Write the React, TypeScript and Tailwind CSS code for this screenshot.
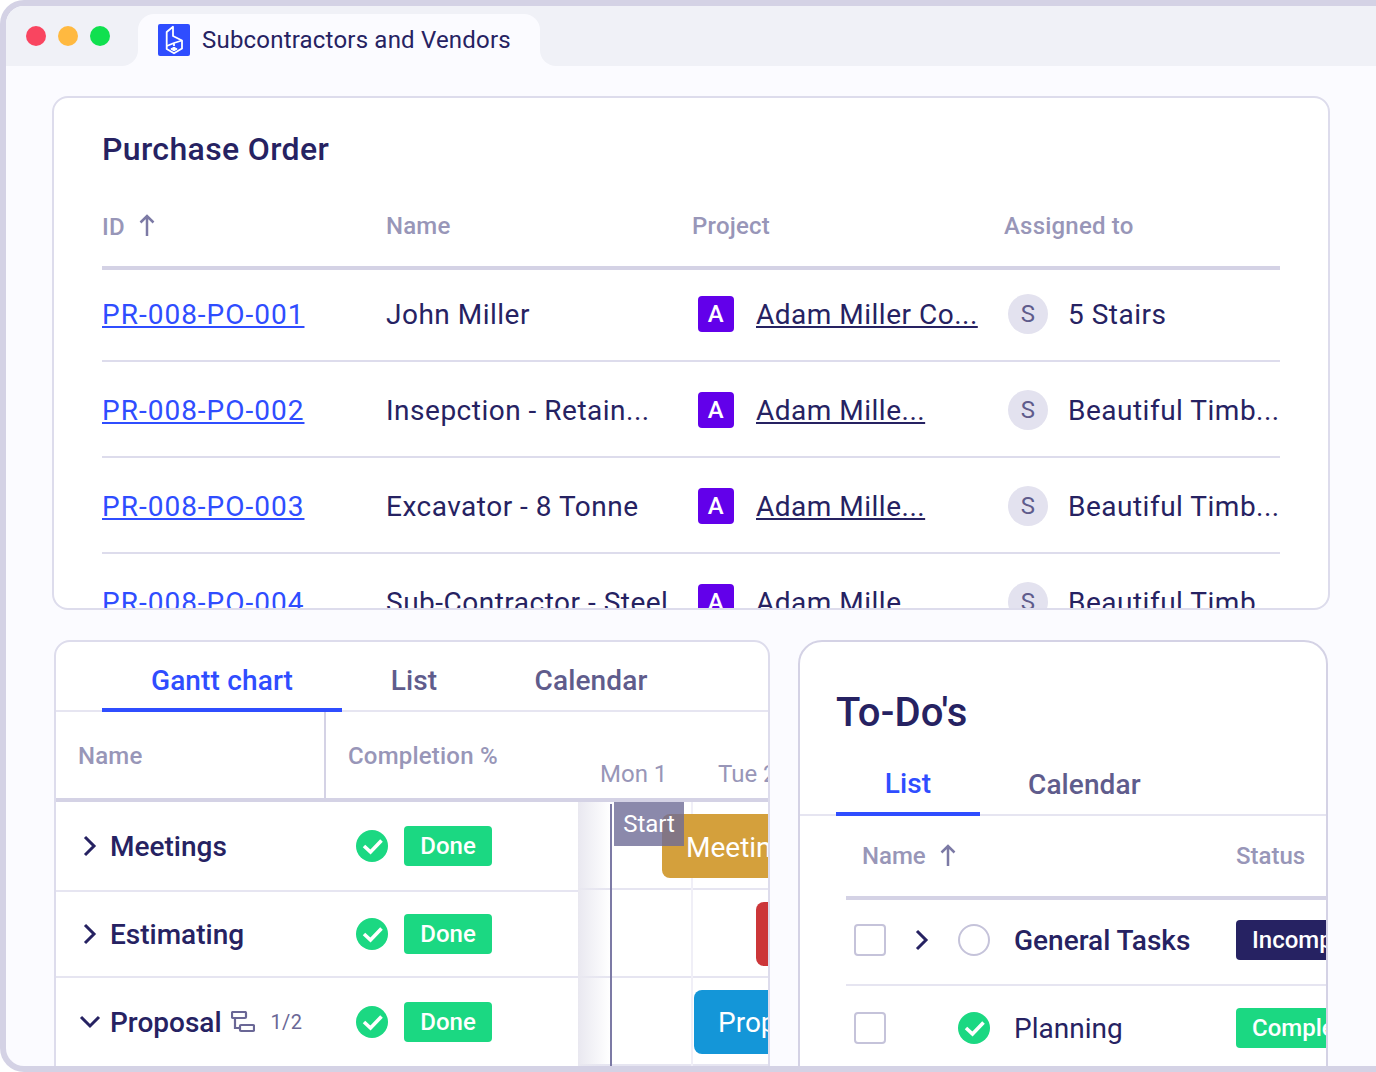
const purchaseOrders = [
  { id: 'PR-008-PO-001', name: 'John Miller', project: 'Adam Miller Co...', vendor: '5 Stairs' },
  { id: 'PR-008-PO-002', name: 'Insepction - Retain...', project: 'Adam Mille...', vendor: 'Beautiful Timb...' },
  { id: 'PR-008-PO-003', name: 'Excavator - 8 Tonne', project: 'Adam Mille...', vendor: 'Beautiful Timb...' },
  { id: 'PR-008-PO-004', name: 'Sub-Contractor - Steel', project: 'Adam Mille', vendor: 'Beautiful Timb' },
];

function Logo() {
  return (
    <svg width="32" height="32" viewBox="0 0 32 32" fill="none" className="shrink-0">
      <rect width="32" height="32" rx="2" fill="#2f4dff" />
      <g stroke="white" strokeWidth="1.800" strokeLinejoin="round">
        <path d="M8.700 8 15 2.800V12l9 4.500v8L16 29.300l-7.300-4.300Z" />
        <path d="M8.700 22 16 19l8-2.500M16 19v3" />
        <path d="m12.800 25 3.200-1.800 3.200 1.800-3.200 1.800Z" fill="white" strokeWidth="1" />
      </g>
    </svg>
  );
}

function SortArrow() {
  return (
    <svg width="16" height="22" viewBox="0 0 16 22" fill="none" stroke="#7c7aa5" strokeWidth="2.500" className="-mt-[3px] shrink-0">
      <path d="M8 22V2M1.500 8.500 8 2l6.500 6.500" />
    </svg>
  );
}

function Chevron({ open = false }: { open?: boolean }) {
  return (
    <svg width="30" height="30" viewBox="0 0 30 30" fill="none" stroke="#262262" strokeWidth="3" className="shrink-0">
      {open ? <path d="m6 10 9 9 9-9" /> : <path d="m11 6 9 9-9 9" />}
    </svg>
  );
}

function CheckCircle() {
  return (
    <svg width="32" height="32" viewBox="0 0 32 32" className="shrink-0">
      <circle cx="16" cy="16" r="16" fill="#1bd882" />
      <path d="m8 16 6.500 6L25.500 10.500" fill="none" stroke="white" strokeWidth="3.600" />
    </svg>
  );
}

function SubtaskIcon() {
  return (
    <svg width="24" height="22" viewBox="0 0 24 22" fill="none" stroke="#6a6796" strokeWidth="2.200" className="shrink-0">
      <rect x="1" y="1" width="14" height="6" rx="1" />
      <rect x="9" y="14" width="14" height="6" rx="1" />
      <path d="M4 7v10h5" />
    </svg>
  );
}

function PurchaseOrderCard() {
  return (
    <section className="h-[514px] w-[1278px] shrink-0 overflow-hidden rounded-[16px] border-2 border-[#dddcec] bg-white px-12 pt-[30px]">
      <h2 className="text-[32px] leading-[42px] font-medium tracking-[0.36px] text-[#262262]">Purchase Order</h2>
      <div className="mt-[37px] grid h-[63px] grid-cols-[284px_306px_312px_1fr] border-b-4 border-[#d4d2e5] pb-[20px] text-[24px] leading-[38px] font-medium tracking-[0.2px] text-[#9896b8]">
        <div className="flex items-center gap-[14px]">
          ID <SortArrow />
        </div>
        <div>Name</div>
        <div>Project</div>
        <div>Assigned to</div>
      </div>
      {purchaseOrders.map((row, i) => (
        <div
          key={row.id}
          className={`grid grid-cols-[284px_306px_312px_1fr] items-center border-b-2 border-[#dddcec] text-[28px] tracking-[0.5px] text-[#262262] ${
            i === 0 ? 'h-[92px] pb-[2px]' : 'h-[96px] pt-[2px]'
          }`}
        >
          <a className="pt-[2px] tracking-[1px] text-[#2f4dff] underline decoration-2 underline-offset-2">{row.id}</a>
          <div className="pt-[2px] whitespace-nowrap">{row.name}</div>
          <div className="flex items-center gap-[22px] pl-[6px]">
            <span className="flex h-9 w-9 items-center justify-center rounded-[4px] bg-[#6200ea] text-[24px] font-medium text-white">
              A
            </span>
            <span className="pt-[2px] whitespace-nowrap underline underline-offset-2">{row.project}</span>
          </div>
          <div className="flex items-center gap-5 pl-1">
            <span className="flex h-10 w-10 items-center justify-center rounded-full bg-[#e3e2ef] text-[24px] text-[#5f5c8c]">
              S
            </span>
            <span className="pt-[2px] whitespace-nowrap">{row.vendor}</span>
          </div>
        </div>
      ))}
    </section>
  );
}

const ganttRows = [
  { name: 'Meetings', open: false, h: 'h-[90px]' },
  { name: 'Estimating', open: false, h: 'h-[86px]' },
  { name: 'Proposal', open: true, h: 'h-[88px]' },
];

function GanttCard() {
  return (
    <section className="h-[440px] w-[716px] shrink-0 overflow-hidden rounded-t-[16px] border-2 border-[#dddcec] bg-white">
      <div className="flex h-[70px] border-b-2 border-[#e6e5f1] pl-[46px] text-[28px] font-medium tracking-[0.15px]">
        <div className="-mb-[2px] flex h-[70px] w-[240px] items-center justify-center border-b-4 border-[#2f4dff] pt-[12px] text-[#2f4dff]">
          Gantt chart
        </div>
        <div className="flex w-[144px] items-center justify-center pt-[10px] text-[#5f5c8c]">List</div>
        <div className="flex w-[210px] items-center justify-center pt-[10px] text-[#5f5c8c]">Calendar</div>
      </div>
      <div className="flex h-[90px] border-b-4 border-[#d4d2e5] text-[24px] tracking-[0.2px] text-[#9896b8]">
        <div className="flex w-[270px] shrink-0 items-center border-r-2 border-[#d4d2e5] pt-[2px] pl-[22px] font-medium">Name</div>
        <div className="flex w-[274px] shrink-0 items-center pt-[2px] pl-[22px] font-medium whitespace-nowrap">Completion %</div>
        <div className="w-[118px] shrink-0 pt-[44px] leading-[36px] tracking-normal">Mon 1</div>
        <div className="pt-[44px] leading-[36px] tracking-normal whitespace-nowrap">Tue 2</div>
      </div>
      <div className="flex">
        <div className="w-[522px] shrink-0">
          {ganttRows.map((row, i) => (
            <div key={row.name} className={`flex items-center ${row.h} ${i < 2 ? 'border-b-2 border-[#e6e5f1]' : ''}`}>
              <div className="flex w-[300px] items-center text-[28px] font-medium text-[#262262]">
                <span className={row.open ? 'ml-[19px]' : 'ml-[18px]'}>
                  <Chevron open={row.open} />
                </span>
                <span className={`pt-[2px] ${row.open ? 'ml-[5px]' : 'ml-[6px]'}`}>{row.name}</span>
                {row.open && (
                  <>
                    <span className="ml-[9px]">
                      <SubtaskIcon />
                    </span>
                    <span className="ml-4 text-[20px] font-normal tracking-[0.3px] text-[#6a6796]">1/2</span>
                  </>
                )}
              </div>
              <CheckCircle />
              <span className="ml-4 flex h-10 w-[88px] items-center justify-center rounded-[4px] bg-[#1bd882] text-[24px] font-medium text-white">
                Done
              </span>
            </div>
          ))}
        </div>
        <div className="relative h-[264px] flex-1 overflow-hidden">
          <div className="h-[88px] border-b-2 border-[#e6e5f1]" />
          <div className="h-[88px] border-b-2 border-[#e6e5f1]" />
          <div className="h-[88px] border-b-2 border-[#e6e5f1]" />
          <div className="absolute inset-y-0 left-0 w-8 bg-gradient-to-r from-[#e9e8f0] to-transparent" />
          <div className="absolute inset-y-0 left-[113px] w-[2px] bg-[#f0eff7]" />
          <div className="absolute top-[2px] bottom-0 left-[32px] w-[2px] bg-[#7c7aa5]" />
          <div className="absolute top-[12px] left-[84px] flex h-16 w-[160px] items-center rounded-[8px] bg-[#d4a03c] pt-[3px] pl-6 text-[28px] text-white">
            Meeting
          </div>
          <div className="absolute top-[100px] left-[178px] h-16 w-[40px] rounded-[8px] bg-[#cc3639]" />
          <div className="absolute top-[188px] left-[116px] flex h-16 w-[200px] items-center rounded-[8px] bg-[#1496d8] pt-[2px] pl-6 text-[28px] text-white">
            Proposal
          </div>
          <div className="absolute top-0 left-[36px] flex h-[44px] w-[70px] items-center justify-center bg-[#6e6b96]/80 text-[24px] text-white">
            Start
          </div>
        </div>
      </div>
    </section>
  );
}

function TodoCard() {
  return (
    <section className="h-[440px] w-[530px] shrink-0 overflow-hidden rounded-t-[24px] border-2 border-[#d4d2e5] bg-white">
      <h2 className="pt-[45px] pl-[36px] text-[40px] leading-[52px] font-medium tracking-[0.2px] text-[#262262]">To-Do's</h2>
      <div className="mt-[17px] flex h-[60px] border-b-2 border-[#e6e5f1] pl-[36px] text-[28px] font-medium tracking-[0.1px]">
        <div className="-mb-[2px] flex h-[60px] w-[144px] items-center justify-center border-b-4 border-[#2f4dff] text-[#2f4dff]">
          List
        </div>
        <div className="flex items-center pl-[48px] text-[#5f5c8c]">Calendar</div>
      </div>
      <div className="ml-[46px] flex h-[84px] items-start border-b-4 border-[#d4d2e5] pt-[20px] text-[24px] leading-[40px] font-medium text-[#9896b8]">
        <div className="flex w-[390px] items-center gap-[14px] pl-4">
          Name <SortArrow />
        </div>
        <div>Status</div>
      </div>
      <div className="ml-[46px] flex h-[86px] items-center border-b-2 border-[#e6e5f1] pb-[4px] text-[28px] text-[#262262]">
        <span className="ml-2 h-8 w-8 shrink-0 rounded-[4px] border-2 border-[#c5c3da]" />
        <span className="ml-[20px]">
          <Chevron />
        </span>
        <span className="ml-[22px] h-8 w-8 shrink-0 rounded-full border-2 border-[#c5c3da]" />
        <span className="ml-6 w-[222px] shrink-0 pt-[2px] font-medium">General Tasks</span>
        <span className="flex h-10 w-[140px] shrink-0 items-center rounded-[4px] bg-[#262262] pl-4 text-[24px] font-medium text-white">
          Incomplete
        </span>
      </div>
      <div className="ml-[46px] flex h-[86px] items-center pb-[2px] text-[28px] text-[#262262]">
        <span className="ml-2 h-8 w-8 shrink-0 rounded-[4px] border-2 border-[#c5c3da]" />
        <span className="ml-[72px]">
          <CheckCircle />
        </span>
        <span className="ml-6 w-[222px] shrink-0 pt-[2px]">Planning</span>
        <span className="flex h-10 w-[140px] shrink-0 items-center rounded-[4px] bg-[#1bd882] pl-4 text-[24px] font-medium text-white">
          Complete
        </span>
      </div>
    </section>
  );
}

export default function App() {
  return (
    <div className="h-[1072px] w-[1376px] overflow-hidden bg-white font-['Roboto',sans-serif]">
      <div className="flex h-full flex-col overflow-hidden rounded-l-[24px] border-[6px] border-r-0 border-[#d4d2e5] bg-[#fbfbff]">
        {/* Browser tab bar */}
        <header className="flex h-[60px] shrink-0">
          <div className="flex w-[132px] items-start gap-3 rounded-br-[16px] bg-[#f0f1f7] pt-[20px] pl-5">
            <span className="h-5 w-5 rounded-full bg-[#f94560]" />
            <span className="h-5 w-5 rounded-full bg-[#ffb940]" />
            <span className="h-5 w-5 rounded-full bg-[#10e04f]" />
          </div>
          <div className="w-[402px] bg-[#f0f1f7] pt-2">
            <div className="flex h-[52px] items-center gap-3 rounded-t-[16px] bg-[#fbfbff] pl-5 text-[24px] tracking-[0.2px] text-[#262262]">
              <Logo />
              Subcontractors and Vendors
            </div>
          </div>
          <div className="flex-1 rounded-bl-[16px] bg-[#f0f1f7]" />
        </header>

        <main className="flex flex-col pt-[30px] pl-[46px]">
          <PurchaseOrderCard />
          <div className="mt-[30px] ml-[2px] flex gap-[28px]">
            <GanttCard />
            <TodoCard />
          </div>
        </main>
      </div>
    </div>
  );
}
